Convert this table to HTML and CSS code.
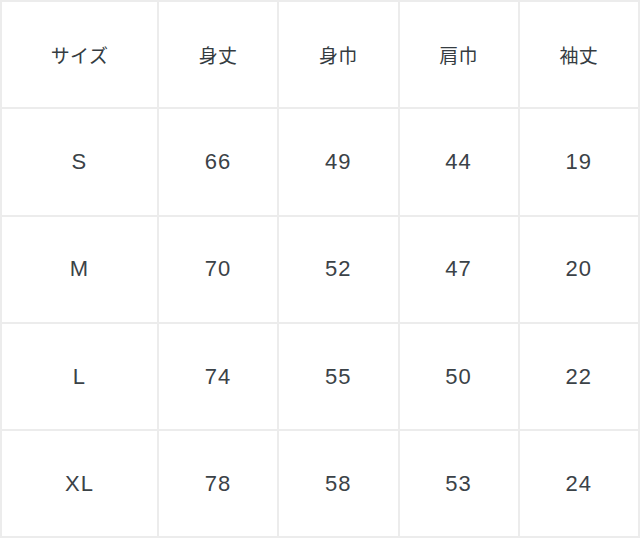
FILE: index.html
```html
<!DOCTYPE html>
<html lang="ja">
<head>
<meta charset="utf-8">
<link rel="stylesheet" href="styles.css">
</head>
<body>
<table class="size-table">
  <thead>
    <tr><th class="col-size">サイズ</th><th>身丈</th><th>身巾</th><th>肩巾</th><th>袖丈</th></tr>
  </thead>
  <tbody>
    <tr><td>S</td><td>66</td><td>49</td><td>44</td><td>19</td></tr>
    <tr><td>M</td><td>70</td><td>52</td><td>47</td><td>20</td></tr>
    <tr><td>L</td><td>74</td><td>55</td><td>50</td><td>22</td></tr>
    <tr><td>XL</td><td>78</td><td>58</td><td>53</td><td>24</td></tr>
  </tbody>
</table>
</body>
</html>
```

FILE: styles.css
```css
html, body {
  margin: 0;
  padding: 0;
  background: #fff;
}
.size-table {
  border-collapse: collapse;
  width: 640px;
  table-layout: fixed;
  font-family: "Liberation Sans", "Noto Sans CJK JP", sans-serif;
  color: #3b4247;
}
.size-table th,
.size-table td {
  border: 2px solid #ececec;
  height: 105.3px;
  padding: 0;
  text-align: center;
  vertical-align: middle;
  font-size: 22px;
  font-weight: normal;
  letter-spacing: 0.05em;
}
.size-table th {
  font-size: 19px;
  font-weight: normal;
  letter-spacing: 0.02em;
  color: #353c41;
}
.col-size {
  width: 155px;
}
```
